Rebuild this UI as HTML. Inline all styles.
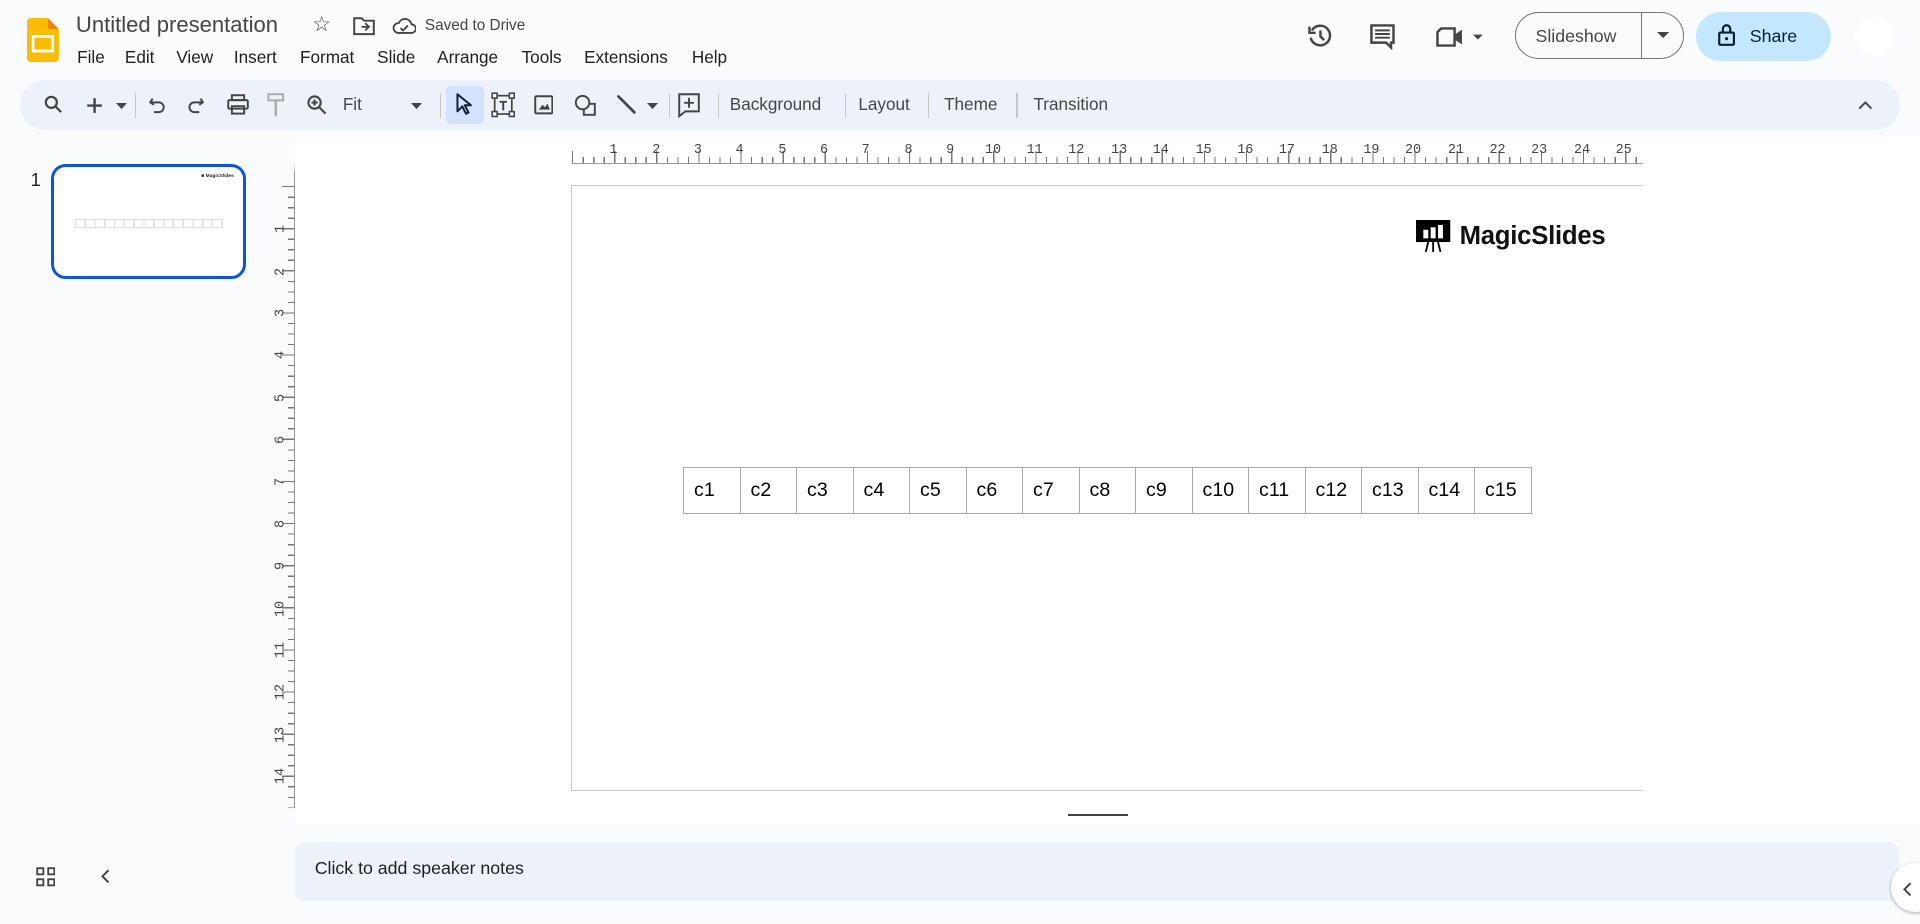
<!DOCTYPE html>
<html><head><meta charset="utf-8"><style>
html,body{margin:0;padding:0;}
body{width:1568px;height:755px;zoom:1.2244898;background:#f9fbfd;font-family:"Liberation Sans",sans-serif;color:#1f1f1f;position:relative;overflow:hidden;}
.a{position:absolute;}
.menu span{margin-right:0;position:absolute;font-size:14px;top:0;}
.tb{position:absolute;left:16px;top:65px;width:1536px;height:41px;background:#edf2fa;border-radius:21px;}
.sep{position:absolute;top:11px;width:1px;height:20px;background:#c7c7c7;}
.tl{position:absolute;top:12px;font-size:14px;color:#444746;}
.hr span{position:absolute;top:0;font-size:11px;color:#444;font-family:"Liberation Mono",monospace;transform:translateX(-50%);}
.vr span{position:absolute;left:0;font-size:11px;color:#444;font-family:"Liberation Mono",monospace;transform:translateY(-50%) rotate(-90deg);}
table{border-collapse:collapse;table-layout:fixed;width:693px;}
td{border:1px solid #aaa;height:38px;padding:0 0 0 8px;box-sizing:border-box;font-size:16px;color:#000;}
svg{position:absolute;}
</style></head><body>
<svg style="left:22px;top:15px" width="26" height="36" viewBox="0 0 26 36"><path d="M3 0h14l9 9v24a3 3 0 0 1-3 3H3a3 3 0 0 1-3-3V3a3 3 0 0 1 3-3z" fill="#fbbc04"/><path d="M17 0l9 9h-7a2 2 0 0 1-2-2z" fill="#ea8600"/><rect x="5" y="15" width="16" height="12" fill="none" stroke="#fff" stroke-width="2.2"/></svg>
<div class="a" style="left:62px;top:10px;font-size:18px;color:#444746">Untitled presentation</div>
<div class="a" style="left:255px;top:10px;font-size:17px;color:#444">☆</div>
<svg style="left:288px;top:14px" width="18" height="15" viewBox="0 0 18 15"><path d="M1 1h6l2 2h8v11H1z" fill="none" stroke="#444" stroke-width="1.6"/><path d="M7 8h6M10 5l3 3-3 3" fill="none" stroke="#444" stroke-width="1.5"/></svg>
<svg style="left:320px;top:14px" width="20" height="15" viewBox="0 0 20 15"><path d="M5 13h11a3.5 3.5 0 0 0 0-7 5.5 5.5 0 0 0-10.5-1A4 4 0 0 0 5 13z" fill="none" stroke="#444" stroke-width="1.5"/><path d="M7 9l2 2 4-4" fill="none" stroke="#444" stroke-width="1.5"/></svg>
<div class="a" style="left:347px;top:14px;font-size:12.5px;color:#444746">Saved to Drive</div>
<div class="a menu" style="left:0;top:38px;">
<span style="left:63px">File</span><span style="left:102px">Edit</span><span style="left:144px">View</span><span style="left:191px">Insert</span><span style="left:245px">Format</span><span style="left:308px">Slide</span><span style="left:357px">Arrange</span><span style="left:426px">Tools</span><span style="left:477px">Extensions</span><span style="left:565px">Help</span></div>
<svg style="left:1067px;top:19px" width="22" height="22" viewBox="0 0 22 22"><path d="M4 6a8 8 0 1 1-1 6" fill="none" stroke="#444" stroke-width="2"/><path d="M2 3v5h5" fill="none" stroke="#444" stroke-width="2"/><path d="M11 6v5l3 3" fill="none" stroke="#444" stroke-width="2"/></svg>
<svg style="left:1118px;top:19px" width="22" height="22" viewBox="0 0 22 22"><path d="M2 2h18v14h-2v4l-4-4H2z" fill="none" stroke="#444" stroke-width="2"/><path d="M5 6h12M5 9h12M5 12h12" stroke="#444" stroke-width="1.6"/></svg>
<svg style="left:1172px;top:21px" width="44" height="18" viewBox="0 0 44 18"><path d="M5 2h11v14H2V5z" fill="none" stroke="#444" stroke-width="2"/><path d="M16 7l6-4v12l-6-4z" fill="#444"/><path d="M31 7h8l-4 4z" fill="#444"/></svg>
<div class="a" style="left:1237px;top:10px;width:138px;height:38px;border:1px solid #747775;border-radius:20px;box-sizing:border-box"></div>
<div class="a" style="left:1340px;top:10px;width:1px;height:38px;background:#747775"></div>
<div class="a" style="left:1254px;top:21px;font-size:14.5px;color:#444746">Slideshow</div>
<svg style="left:1353px;top:26px" width="10" height="6"><path d="M0 0h10L5 5z" fill="#444"/></svg>
<div class="a" style="left:1385px;top:10px;width:110px;height:40px;background:#c2e7ff;border-radius:20px"></div>
<svg style="left:1403px;top:20px" width="14" height="18" viewBox="0 0 14 18"><rect x="1" y="7" width="12" height="10" rx="1" fill="none" stroke="#0b1f33" stroke-width="1.8"/><path d="M4 7V4a3 3 0 0 1 6 0v3" fill="none" stroke="#0b1f33" stroke-width="1.8"/><circle cx="7" cy="12" r="1.3" fill="#0b1f33"/></svg>
<div class="a" style="left:1429px;top:21px;font-size:14.5px;color:#0b1f33">Share</div>
<div class="a" style="left:1515px;top:14px;width:32px;height:32px;border-radius:50%;background:#fff"></div>
<div class="tb">
<svg style="left:20px;top:13px" width="16" height="16" viewBox="0 0 16 16"><circle cx="6" cy="6" r="4.5" fill="none" stroke="#444" stroke-width="1.8"/><path d="M9.5 9.5L14 14" stroke="#444" stroke-width="1.8"/></svg>
<svg style="left:54px;top:14px" width="14" height="14"><path d="M7 1v12M1 7h12" stroke="#444" stroke-width="2"/></svg>
<svg style="left:79px;top:19px" width="9" height="5"><path d="M0 0h9L4.5 5z" fill="#444"/></svg>
<div class="sep" style="left:94px"></div>
<svg style="left:106px;top:13px" width="14" height="16" viewBox="0 0 14 16"><path d="M3 3L1 6l3 2" fill="none" stroke="#444" stroke-width="1.6"/><path d="M1.5 6H8a4 4 0 0 1 0 8H4" fill="none" stroke="#444" stroke-width="1.6"/></svg>
<svg style="left:137px;top:13px" width="14" height="16" viewBox="0 0 14 16"><path d="M11 3l2 3-3 2" fill="none" stroke="#444" stroke-width="1.6"/><path d="M12.5 6H6a4 4 0 0 0 0 8h4" fill="none" stroke="#444" stroke-width="1.6"/></svg>
<svg style="left:169px;top:12px" width="18" height="17" viewBox="0 0 18 17"><rect x="4" y="1" width="10" height="4" fill="none" stroke="#444" stroke-width="1.6"/><rect x="1" y="5" width="16" height="7" rx="1" fill="none" stroke="#444" stroke-width="1.6"/><rect x="4" y="10" width="10" height="6" fill="none" stroke="#444" stroke-width="1.6"/></svg>
<svg style="left:201px;top:11px" width="16" height="20" viewBox="0 0 16 20"><rect x="2" y="1" width="12" height="5" fill="none" stroke="#aaa" stroke-width="1.6"/><path d="M8 6v4M8 10v9" stroke="#aaa" stroke-width="2"/></svg>
<svg style="left:234px;top:12px" width="17" height="17" viewBox="0 0 17 17"><circle cx="7" cy="7" r="5" fill="none" stroke="#444" stroke-width="1.7"/><path d="M11 11l5 5M7 4.5v5M4.5 7h5" stroke="#444" stroke-width="1.7"/></svg>
<div class="tl" style="left:264px;color:#444746">Fit</div>
<svg style="left:320px;top:19px" width="9" height="5"><path d="M0 0h9L4.5 5z" fill="#444"/></svg>
<div class="sep" style="left:343px"></div>
<div class="a" style="left:348px;top:5px;width:31px;height:31px;background:#d3e3fd;border-radius:4px"></div>
<svg style="left:356px;top:11px" width="14" height="18" viewBox="0 0 14 18"><path d="M2 1v14l4-4 3 6 2-1-3-6h5z" fill="none" stroke="#0b1f33" stroke-width="1.6" stroke-linejoin="round"/></svg>
<svg style="left:385px;top:10px" width="20" height="21" viewBox="0 0 20 21"><rect x="3" y="3" width="14" height="15" fill="none" stroke="#444" stroke-width="1.4"/><rect x="1" y="1" width="4" height="4" fill="#fff" stroke="#444" stroke-width="1.3"/><rect x="15" y="1" width="4" height="4" fill="#fff" stroke="#444" stroke-width="1.3"/><rect x="1" y="16" width="4" height="4" fill="#fff" stroke="#444" stroke-width="1.3"/><rect x="15" y="16" width="4" height="4" fill="#fff" stroke="#444" stroke-width="1.3"/><path d="M7 8h6M10 8v7" stroke="#444" stroke-width="1.6"/></svg>
<svg style="left:420px;top:13px" width="16" height="16" viewBox="0 0 16 16"><rect x="1" y="1" width="14" height="14" rx="1" fill="none" stroke="#444" stroke-width="1.6"/><path d="M4 12l3-4 2 2 2-3 2 5z" fill="#444"/></svg>
<svg style="left:453px;top:12px" width="18" height="18" viewBox="0 0 18 18"><circle cx="7" cy="7" r="5.5" fill="none" stroke="#444" stroke-width="1.6"/><path d="M12 8h5v9H8v-4" fill="none" stroke="#444" stroke-width="1.6"/></svg>
<svg style="left:487px;top:12px" width="17" height="17"><path d="M2 2l13 13" stroke="#444" stroke-width="2.2" stroke-linecap="round"/></svg>
<svg style="left:512px;top:19px" width="9" height="5"><path d="M0 0h9L4.5 5z" fill="#444"/></svg>
<div class="sep" style="left:530px"></div>
<svg style="left:538px;top:11px" width="18" height="20" viewBox="0 0 18 20"><path d="M1 1h16v14H6l-5 4z" fill="none" stroke="#444" stroke-width="1.6"/><path d="M9 4v8M5 8h8" stroke="#444" stroke-width="1.6"/></svg>
<div class="sep" style="left:570px"></div>
<div class="tl" style="left:580px">Background</div>
<div class="sep" style="left:674px"></div>
<div class="tl" style="left:685px">Layout</div>
<div class="sep" style="left:742px"></div>
<div class="tl" style="left:755px">Theme</div>
<div class="sep" style="left:814px"></div>
<div class="tl" style="left:828px">Transition</div>
<svg style="left:1501px;top:17px" width="12" height="8"><path d="M1 7l5-5 5 5" fill="none" stroke="#444" stroke-width="1.6"/></svg>
</div>
<div class="a" style="left:25px;top:138px;font-size:15px">1</div>
<div class="a" style="left:42px;top:134px;width:159px;height:94px;border:3px solid #0b57d0;border-radius:12px;background:#fff;box-sizing:border-box;overflow:hidden">
<div class="a" style="left:120px;top:6px;font-size:4px;font-weight:bold">■ MagicSlides</div>
<div class="a" style="left:17px;top:42px;width:119px;height:6px;border:1px solid #ddd;background:repeating-linear-gradient(90deg,transparent 0 7px,#ddd 7px 8px)"></div>
</div>
<svg style="left:29px;top:708px" width="16" height="16" viewBox="0 0 16 16"><g fill="none" stroke="#444" stroke-width="1.5"><rect x="1" y="1" width="5" height="5"/><rect x="10" y="1" width="5" height="5"/><rect x="1" y="10" width="5" height="5"/><rect x="10" y="10" width="5" height="5"/></g></svg>
<svg style="left:82px;top:710px" width="8" height="12"><path d="M7 1L2 6l5 5" fill="none" stroke="#444" stroke-width="1.6"/></svg>
<div class="a" style="left:241px;top:112px;width:1327px;height:560px;background:#fff"></div>
<div class="a" style="left:240px;top:134px;width:1px;height:527px;background:#ddd"></div>
<div class="a" style="left:467px;top:128px;width:875px;height:5px;background:repeating-linear-gradient(90deg,#777 0 1px,transparent 1px 8.6px);"></div>
<div class="a" style="left:467px;top:123px;width:875px;height:10px;background:repeating-linear-gradient(90deg,#777 0 1px,transparent 1px 34.4px);"></div>
<div class="a" style="left:467px;top:133px;width:875px;height:1px;background:#999"></div>
<div class="a hr" style="left:0;top:117px;">
<span style="left:501px">1</span><span style="left:536px">2</span><span style="left:570px">3</span><span style="left:604px">4</span><span style="left:639px">5</span><span style="left:673px">6</span><span style="left:707px">7</span><span style="left:742px">8</span><span style="left:776px">9</span><span style="left:811px">10</span><span style="left:845px">11</span><span style="left:879px">12</span><span style="left:914px">13</span><span style="left:948px">14</span><span style="left:983px">15</span><span style="left:1017px">16</span><span style="left:1051px">17</span><span style="left:1086px">18</span><span style="left:1120px">19</span><span style="left:1154px">20</span><span style="left:1189px">21</span><span style="left:1223px">22</span><span style="left:1257px">23</span><span style="left:1292px">24</span><span style="left:1326px">25</span></div>
<div class="a" style="left:235px;top:152px;width:5px;height:508px;background:repeating-linear-gradient(180deg,#777 0 1px,transparent 1px 8.6px);"></div>
<div class="a" style="left:230px;top:152px;width:10px;height:508px;background:repeating-linear-gradient(180deg,#777 0 1px,transparent 1px 34.4px);"></div>
<div class="a" style="left:240px;top:140px;width:1px;height:520px;background:#999"></div>
<div class="a vr" style="left:226px;top:0">
<span style="top:187px">1</span><span style="top:222px">2</span><span style="top:256px">3</span><span style="top:290px">4</span><span style="top:325px">5</span><span style="top:359px">6</span><span style="top:394px">7</span><span style="top:428px">8</span><span style="top:462px">9</span><span style="top:497px;left:-3px">10</span><span style="top:531px;left:-3px">11</span><span style="top:565px;left:-3px">12</span><span style="top:600px;left:-3px">13</span><span style="top:634px;left:-3px">14</span></div>
<div class="a" style="left:466px;top:151px;width:876px;height:495px;border:1px solid #c8c8c8;border-right:none;background:#fff;box-sizing:border-box"></div>
<svg style="left:1156px;top:180px" width="29" height="27" viewBox="0 0 29 27"><rect x="0" y="0" width="28" height="18" fill="#000"/><rect x="6" y="8" width="4" height="7" fill="#fff"/><rect x="12" y="6" width="4" height="9" fill="#fff"/><rect x="18" y="4" width="4" height="11" fill="#fff"/><path d="M10 18l-2 8M14 18v8M18 18l2 8" stroke="#000" stroke-width="1.5"/></svg>
<div class="a" style="left:1192px;top:181px;font-size:21px;font-weight:bold;color:#111;letter-spacing:-0.2px">MagicSlides</div>
<table class="a" style="left:558px;top:381px"><tr><td>c1</td><td>c2</td><td>c3</td><td>c4</td><td>c5</td><td>c6</td><td>c7</td><td>c8</td><td>c9</td><td>c10</td><td>c11</td><td>c12</td><td>c13</td><td>c14</td><td>c15</td></tr></table>
<div class="a" style="left:872px;top:665px;width:49px;height:1px;background:#444"></div>
<div class="a" style="left:241px;top:688px;width:1310px;height:48px;background:#edf2fa;border-radius:8px"></div>
<div class="a" style="left:257px;top:701px;font-size:14.5px;color:#1f1f1f">Click to add speaker notes</div>
<div class="a" style="left:1544px;top:705px;width:40px;height:40px;border-radius:50%;background:#fff;box-shadow:0 1px 3px rgba(0,0,0,.3)"></div>
<svg style="left:1553px;top:720px" width="8" height="12"><path d="M7 1L2 6l5 5" fill="none" stroke="#444" stroke-width="1.6"/></svg>
</body></html>
